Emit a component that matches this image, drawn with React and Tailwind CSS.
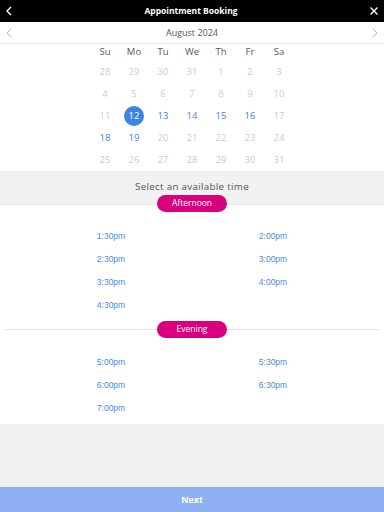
import React from "react";

const days = ["Su", "Mo", "Tu", "We", "Th", "Fr", "Sa"];

// each cell: [label, state] state: p = past/unavailable, a = available, s = selected
const weeks = [
  [["28", "p"], ["29", "p"], ["30", "p"], ["31", "p"], ["1", "p"], ["2", "p"], ["3", "p"]],
  [["4", "p"], ["5", "p"], ["6", "p"], ["7", "p"], ["8", "p"], ["9", "p"], ["10", "p"]],
  [["11", "p"], ["12", "s"], ["13", "a"], ["14", "a"], ["15", "a"], ["16", "a"], ["17", "p"]],
  [["18", "a"], ["19", "a"], ["20", "p"], ["21", "p"], ["22", "p"], ["23", "p"], ["24", "p"]],
  [["25", "p"], ["26", "p"], ["27", "p"], ["28", "p"], ["29", "p"], ["30", "p"], ["31", "p"]],
];

const afternoon = ["1:30pm", "2:00pm", "2:30pm", "3:00pm", "3:30pm", "4:00pm", "4:30pm"];
const evening = ["5:00pm", "5:30pm", "6:00pm", "6:30pm", "7:00pm"];

function Pill({ label }) {
  return (
    <div className="flex h-[17px] w-[70px] items-center justify-center rounded-full bg-[#d9007e] text-[8.5px] text-white">
      {label}
    </div>
  );
}

function TimeGrid({ slots }) {
  return (
    <div className="grid grid-cols-2 px-[30px] pt-[12.5px] pb-[4.5px]">
      {slots.map((t) => (
        <div
          key={t}
          className="flex h-[23px] items-center justify-center font-['Liberation_Sans',Arial,sans-serif] text-[8.5px] text-[#4a8be0]"
        >
          {t}
        </div>
      ))}
    </div>
  );
}

export default function App() {
  return (
    <div className="flex h-[512px] w-[384px] flex-col bg-[#f1f1f1] font-['Open_Sans',sans-serif]">
      {/* top bar */}
      <div className="flex h-[22px] items-center justify-between bg-black px-[5px]">
        <svg width="8" height="10" viewBox="0 0 8 10">
          <path d="M6 1 L2 5 L6 9" fill="none" stroke="white" strokeWidth="1.4" />
        </svg>
        <span className="text-[8.5px] font-bold text-white">Appointment Booking</span>
        <svg width="10" height="10" viewBox="0 0 10 10">
          <path d="M1.5 1.5 L8.5 8.5 M8.5 1.5 L1.5 8.5" stroke="white" strokeWidth="1.4" />
        </svg>
      </div>

      {/* month bar */}
      <div className="flex h-[22px] items-center justify-between border-b border-[#e6e6e6] bg-white px-[5px]">
        <svg width="8" height="10" viewBox="0 0 8 10">
          <path d="M6 1 L2 5 L6 9" fill="none" stroke="#b5b5b5" strokeWidth="1" />
        </svg>
        <span className="text-[9px] text-[#555]">August 2024</span>
        <svg width="8" height="10" viewBox="0 0 8 10">
          <path d="M2 1 L6 5 L2 9" fill="none" stroke="#b5b5b5" strokeWidth="1" />
        </svg>
      </div>

      {/* calendar */}
      <div className="bg-white">
        <div className="mx-auto grid w-[203px] grid-cols-7">
          {days.map((d) => (
            <div key={d} className="flex h-[17px] items-center justify-center text-[9.5px] text-[#555]">
              {d}
            </div>
          ))}
          {weeks.flat().map(([n, s], i) => (
            <div key={i} className="flex h-[22px] items-center justify-center">
              {s === "s" ? (
                <span className="flex h-[20px] w-[20px] items-center justify-center rounded-full bg-[#3b86e0] text-[9.5px] text-white">
                  {n}
                </span>
              ) : (
                <span
                  className={
                    s === "a" ? "text-[9.5px] text-[#3f82dc]" : "text-[9.5px] text-[#cbcbcb]"
                  }
                >
                  {n}
                </span>
              )}
            </div>
          ))}
        </div>
      </div>

      {/* select time header */}
      <div className="flex h-[24px] items-end justify-center text-[9.8px] tracking-[0.3px] text-[#555]">
        Select an available time
      </div>
      <div className="flex h-[17px] justify-center bg-[linear-gradient(#f1f1f1_0,#f1f1f1_8.5px,#e6e6e6_8.5px,#e6e6e6_9.5px,white_9.5px)]">
        <Pill label="Afternoon" />
      </div>

      {/* slots */}
      <div className="bg-white">
        <TimeGrid slots={afternoon} />
        <div className="flex items-center px-[5px]">
          <div className="h-px flex-1 bg-[#e3e3e3]" />
          <Pill label="Evening" />
          <div className="h-px flex-1 bg-[#e3e3e3]" />
        </div>
        <TimeGrid slots={evening} />
      </div>

      <div className="flex-1" />

      <div className="flex h-[25px] items-center justify-center bg-[#8fb0f3] text-[9px] font-bold text-white">
        Next
      </div>
    </div>
  );
}
